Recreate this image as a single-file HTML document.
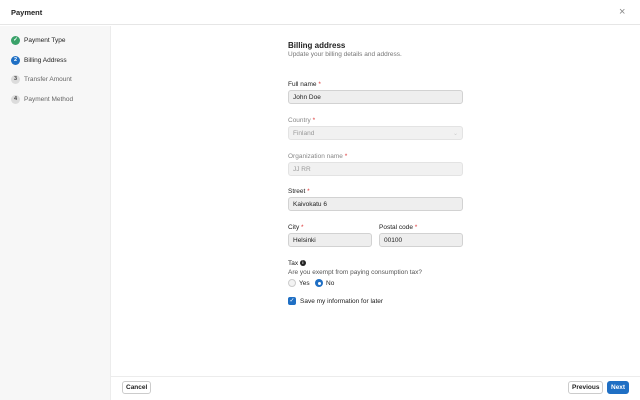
<html><head><style>
*{box-sizing:border-box;margin:0;padding:0}
body{width:640px;height:400px;position:relative;font-family:"Liberation Sans",sans-serif;background:#fff;color:#222;overflow:hidden}
.a{position:absolute}
.t{font-size:6.5px;white-space:nowrap}
.in{position:absolute;height:14px;background:#eee;border:1px solid #d2d2d2;border-radius:3px;font-size:6.5px;padding:3px 4px;color:#222}
.dis{background:#f1f1f1;border-color:#e3e3e3;color:#999}
.lbl{position:absolute;font-size:6.5px;color:#222}
.lbl.d{color:#888}
.r{color:#d33}
.step{position:absolute;left:11px;width:9px;height:9px;border-radius:50%;font-size:5.5px;text-align:center;line-height:9px;font-weight:bold}
.sl{position:absolute;left:24px;font-size:6.5px}
.btn{position:absolute;height:13px;border:1px solid #ccc;border-radius:3px;font-size:6.5px;font-weight:bold;padding:2px 3px;background:#fff}
</style></head><body>
<div class="a" style="left:0;top:0;width:640px;height:25px;border-bottom:1px solid #e6e6e6"></div>
<div class="a t" style="left:11px;top:8px;font-size:7.5px;font-weight:bold;color:#222">Payment</div>
<div class="a" style="left:619px;top:6px;font-size:11px;color:#888">×</div>
<div class="a" style="left:0;top:26px;width:111px;height:374px;background:#f7f7f7;border-right:1px solid #ececec"></div>
<div class="step" style="top:36px;background:#3aa26a;color:#fff">✓</div>
<div class="sl" style="top:37px">Payment Type</div>
<div class="step" style="top:56px;background:#1f6fc4;color:#fff">2</div>
<div class="sl" style="top:57px">Billing Address</div>
<div class="step" style="top:75px;background:#dcdcdc;color:#444">3</div>
<div class="sl" style="top:76px;color:#666">Transfer Amount</div>
<div class="step" style="top:95px;background:#dcdcdc;color:#444">4</div>
<div class="sl" style="top:96px;color:#666">Payment Method</div>

<div class="a t" style="left:288px;top:41px;font-size:8px;font-weight:bold">Billing address</div>
<div class="a t" style="left:288px;top:51px;color:#777">Update your billing details and address.</div>

<div class="lbl" style="left:288px;top:81px">Full name <span class="r">*</span></div>
<div class="in" style="left:288px;top:90px;width:175px">John Doe</div>
<div class="lbl d" style="left:288px;top:117px">Country <span class="r">*</span></div>
<div class="in dis" style="left:288px;top:126px;width:175px">Finland<span style="float:right;color:#ccc;font-size:6px">⌄</span></div>
<div class="lbl d" style="left:288px;top:153px">Organization name <span class="r">*</span></div>
<div class="in dis" style="left:288px;top:162px;width:175px">JJ RR</div>
<div class="lbl" style="left:288px;top:188px">Street <span class="r">*</span></div>
<div class="in" style="left:288px;top:197px;width:175px">Kaivokatu 6</div>
<div class="lbl" style="left:288px;top:224px">City <span class="r">*</span></div>
<div class="in" style="left:288px;top:233px;width:84px">Helsinki</div>
<div class="lbl" style="left:379px;top:224px">Postal code <span class="r">*</span></div>
<div class="in" style="left:379px;top:233px;width:84px">00100</div>

<div class="lbl" style="left:288px;top:260px">Tax <span style="display:inline-block;width:6px;height:6px;border-radius:50%;background:#222;color:#fff;font-size:4.5px;text-align:center;line-height:6px;vertical-align:middle;font-weight:bold">i</span></div>
<div class="lbl" style="left:288px;top:269px;color:#555">Are you exempt from paying consumption tax?</div>
<div class="a" style="left:288px;top:279px;width:8px;height:8px;border-radius:50%;border:1px solid #ccc;background:#f3f3f3"></div>
<div class="lbl" style="left:299px;top:280px">Yes</div>
<div class="a" style="left:315px;top:279px;width:8px;height:8px;border-radius:50%;background:#1f6fc4"><div class="a" style="left:2.5px;top:2.5px;width:3px;height:3px;border-radius:50%;background:#fff"></div></div>
<div class="lbl" style="left:326px;top:280px">No</div>
<div class="a" style="left:288px;top:297px;width:8px;height:8px;border-radius:2px;background:#1f6fc4;color:#fff;font-size:6px;line-height:8px;text-align:center">✓</div>
<div class="lbl" style="left:300px;top:298px">Save my information for later</div>

<div class="a" style="left:111px;top:376px;width:529px;border-top:1px solid #ececec"></div>
<div class="btn" style="left:122px;top:381px">Cancel</div>
<div class="btn" style="left:568px;top:381px">Previous</div>
<div class="btn" style="left:607px;top:381px;background:#1f6fc4;border-color:#1f6fc4;color:#fff">Next</div>
</body></html>
